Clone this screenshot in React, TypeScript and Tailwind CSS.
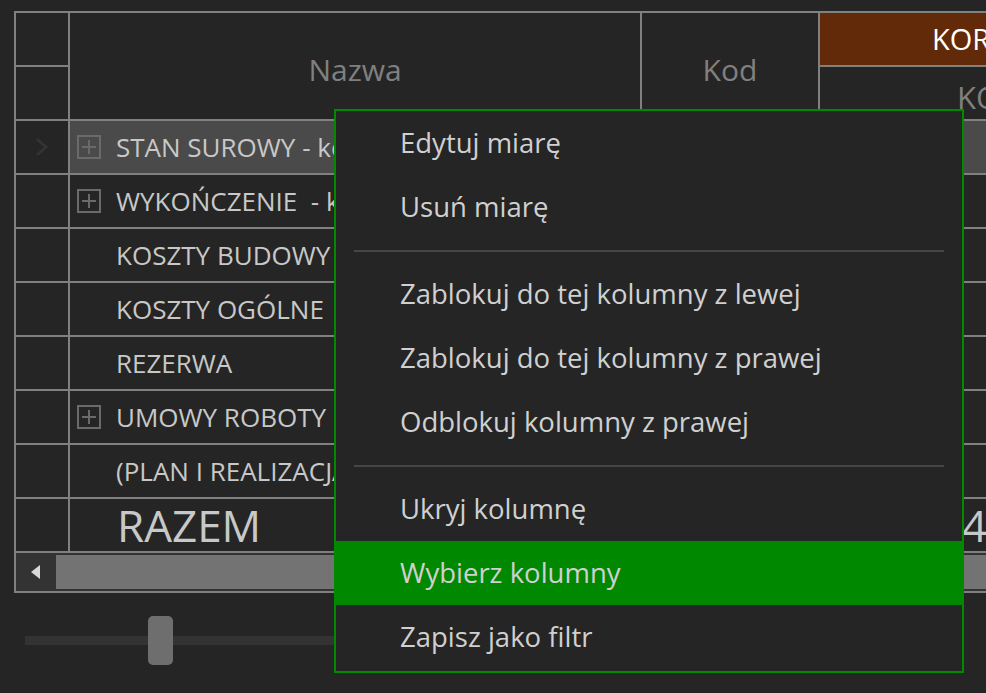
import { Fragment } from 'react';

const rows = [
  { label: 'STAN SUROWY - koszty', expand: true, selected: true },
  { label: 'WYKOŃCZENIE  - koszty', expand: true },
  { label: 'KOSZTY BUDOWY', expand: false },
  { label: 'KOSZTY OGÓLNE', expand: false },
  { label: 'REZERWA', expand: false },
  { label: 'UMOWY ROBOTY', expand: true },
  { label: '(PLAN I REALIZACJA)', expand: false },
];

const menu: ({ sep: true } | { sep?: false; label: string; active?: boolean })[] = [
  { label: 'Edytuj miarę' },
  { label: 'Usuń miarę' },
  { sep: true },
  { label: 'Zablokuj do tej kolumny z lewej' },
  { label: 'Zablokuj do tej kolumny z prawej' },
  { label: 'Odblokuj kolumny z prawej' },
  { sep: true },
  { label: 'Ukryj kolumnę' },
  { label: 'Wybierz kolumny', active: true },
  { label: 'Zapisz jako filtr' },
];

function ExpandBox() {
  return (
    <div className="w-[24px] h-[24px] border-2 border-[#6a6a6a] flex items-center justify-center shrink-0">
      <svg width="16" height="16" viewBox="0 0 16 16">
        <path d="M8 1v14M1 8h14" stroke="#6a6a6a" strokeWidth="2" />
      </svg>
    </div>
  );
}

export default function App() {
  return (
    <div className="relative w-[986px] h-[693px] overflow-hidden bg-[#252525] font-['Open_Sans','Noto_Sans',sans-serif]">
      {/* Grid */}
      <div className="ml-[14px] pt-[11px]">
        <div className="w-[1208px] bg-[#808080] p-[2px] flex flex-col gap-[2px]">
          <div className="grid grid-cols-[52px_570px_176px_400px] auto-rows-[52px] gap-[2px]">
            {/* header */}
            <div className="bg-[#252525]" />
            <div className="row-span-2 bg-[#252525] flex items-center justify-center pt-[6px] text-[30px] text-[#808080]">
              Nazwa
            </div>
            <div className="row-span-2 bg-[#252525] flex items-center justify-center pt-[6px] text-[30px] text-[#808080]">
              Kod
            </div>
            <div className="bg-[#622a09] flex items-center pl-[112px] text-[29px] text-white">KOREKTA</div>
            <div className="bg-[#252525]" />
            <div className="bg-[#252525] flex items-center pl-[137px] pt-[8px] text-[31px] text-[#808080]">KOSZT</div>

            {/* rows */}
            {rows.map((r, i) => (
              <Fragment key={i}>
                <div className="bg-[#252525] flex items-center justify-center">
                  {r.selected && (
                    <svg width="14" height="20" viewBox="0 0 14 20">
                      <path d="M2 2l9 8-9 8" fill="none" stroke="#333333" strokeWidth="3" />
                    </svg>
                  )}
                </div>
                <div
                  className={`flex items-center gap-[15px] pl-[7px] text-[26px] text-[#c8c8c8] whitespace-pre ${
                    r.selected ? 'bg-[#4a4a4a]' : 'bg-[#252525]'
                  }`}
                >
                  {r.expand ? <ExpandBox /> : <div className="w-[24px] shrink-0" />}
                  {r.label}
                </div>
                <div className={r.selected ? 'bg-[#4a4a4a]' : 'bg-[#252525]'} />
                <div className={r.selected ? 'bg-[#4a4a4a]' : 'bg-[#252525]'} />
              </Fragment>
            ))}
            <div className="bg-[#252525]" />
            <div className="bg-[#252525] flex items-center pl-[47px] text-[44px] text-[#c8c8c8]">RAZEM</div>
            <div className="bg-[#252525]" />
            <div className="bg-[#252525] flex items-center pl-[142px] text-[44px] text-[#c8c8c8]">40 317 258</div>
          </div>

          {/* horizontal scrollbar */}
          <div className="h-[38px] bg-[#333333] flex">
            <div className="w-[40px] flex items-center justify-center">
              <svg width="10" height="14" viewBox="0 0 10 14">
                <path d="M9 0v14L0 7z" fill="#d8d8d8" />
              </svg>
            </div>
            <div className="flex-1 my-[2px] bg-[#737373]" />
          </div>
        </div>
      </div>

      {/* zoom slider */}
      <div className="relative mt-[23px] h-[49px] flex items-center">
        <div className="ml-[25px] w-[600px] h-[9px] bg-[#333333]" />
        <div className="absolute left-[148px] top-0 w-[25px] h-[49px] rounded-[5px] bg-[#6e6e6e]" />
      </div>

      {/* context menu */}
      <div className="absolute left-[334px] top-[109px] w-[630px] h-[564px] border-2 border-[#008a00] bg-[#252525] flex flex-col">
        {menu.map((m, i) =>
          m.sep ? (
            <div key={i} className="pt-[11px] pb-[10px] px-[18px]">
              <div className="h-[2px] bg-[#45454a]" />
            </div>
          ) : (
            <div
              key={i}
              className={`h-[64px] shrink-0 flex items-center pl-[64px] text-[27.5px] text-[#d0d0d0] ${
                m.active ? 'bg-[#008800]' : ''
              }`}
            >
              {m.label}
            </div>
          )
        )}
      </div>
    </div>
  );
}
